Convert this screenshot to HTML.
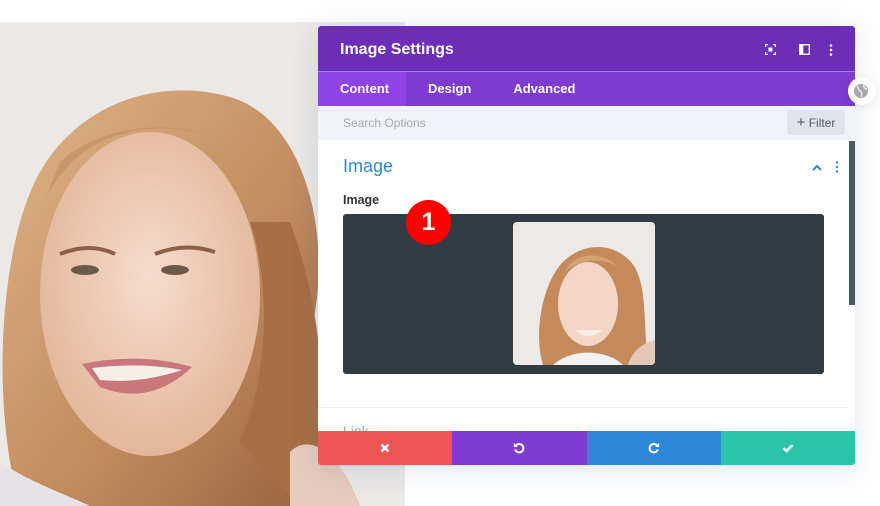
<!DOCTYPE html>
<html><head><meta charset="utf-8">
<style>
*{box-sizing:border-box;margin:0;padding:0}
body{width:880px;height:506px;background:#fff;position:relative;overflow:hidden;font-family:"Liberation Sans",sans-serif}
.photo{position:absolute;left:0;top:22px;width:405px;height:484px}
.panel{position:absolute;left:318px;top:26px;width:537px;height:439px;background:#fff;border-radius:3px;box-shadow:0 5px 30px rgba(43,87,151,.15);overflow:hidden}
.hdr{height:46px;background:#6c2eb9;color:#fff;font-size:16px;font-weight:bold;padding:0 0 0 22px;line-height:48px;border-bottom:1px solid #a77fdc}
.tabs{height:34px;background:#7e3bd0;display:flex;color:#fff;font-size:13px;font-weight:bold}
.tabs div{line-height:34px;padding:0 22px}
.tabs .act{background:#8e42e8;width:88px}
.search{height:34px;background:#f0f3f8;position:relative;color:#a5abb5;font-size:12px;line-height:34px;padding-left:25px}
.filter{position:absolute;right:10px;top:4px;width:58px;height:25px;background:#e1e5eb;border-radius:3px;color:#4c5866;font-size:12px;line-height:25px;text-align:center}
.sec{position:absolute;left:25px;top:130px;color:#2e8ad8;font-size:18px}
.lbl{position:absolute;left:25px;top:167px;color:#333;font-size:12.5px;font-weight:bold}
.box{position:absolute;left:25px;top:188px;width:481px;height:160px;background:#333b45;border-radius:3px}
.thumb{position:absolute;left:170px;top:8px;width:142px;height:143px;border-radius:4px;overflow:hidden}
.badge{position:absolute;left:88px;top:174px;width:45px;height:45px;border-radius:50%;background:#f00;color:#fff;font-weight:bold;font-size:25px;text-align:center;line-height:45px}
.line{position:absolute;left:0;right:6px;top:381px;height:1px;background:#edf1f6}
.bar{position:absolute;left:0;top:405px;width:537px;height:34px;display:flex}
.bar div{flex:1;display:flex;align-items:center;justify-content:center}
.scroll{position:absolute;right:0;top:115px;width:6px;height:164px;background:#4d5866}
</style></head><body>
<svg class="photo" viewBox="0 0 405 484" preserveAspectRatio="none">
<defs><radialGradient id="sk" cx="50%" cy="45%" r="60%"><stop offset="0" stop-color="#f5dccd"/><stop offset="1" stop-color="#e2b396"/></radialGradient>
<linearGradient id="hr" x1="0" y1="0" x2="1" y2="1"><stop offset="0" stop-color="#dfb488"/><stop offset=".6" stop-color="#c08a5e"/><stop offset="1" stop-color="#98643f"/></linearGradient></defs>
<rect width="405" height="484" fill="#ebe8e5"/>
<path d="M20 484 C-10 380 0 220 40 150 C80 80 160 55 230 75 C300 95 330 200 315 290 C305 360 320 420 300 484 Z" fill="url(#hr)"/>
<ellipse cx="150" cy="272" rx="110" ry="162" fill="url(#sk)"/>
<path d="M40 190 C70 110 150 90 230 120 C190 100 110 95 60 140 Z" fill="#c9976b"/>
<path d="M60 232 Q90 220 115 232" stroke="#8c6048" stroke-width="4" fill="none"/>
<path d="M155 232 Q185 220 215 230" stroke="#8c6048" stroke-width="4" fill="none"/>
<ellipse cx="85" cy="248" rx="14" ry="5" fill="#6b5a4c"/>
<ellipse cx="175" cy="248" rx="14" ry="5" fill="#6b5a4c"/>
<path d="M82 342 Q140 330 192 345 Q150 385 100 365 Z" fill="#c9777a"/>
<path d="M92 346 Q140 340 182 348 Q140 362 100 358 Z" fill="#f5efe8"/>
<path d="M250 200 C270 260 270 350 240 420 L300 484 L320 484 C330 380 320 280 290 200 Z" fill="#a86e45"/>
<path d="M290 430 C310 410 340 430 360 484 L290 484 Z" fill="#e6cbbc"/>
<path d="M0 440 C30 460 60 470 90 484 L0 484 Z" fill="#e6e3e6"/>
</svg>
<div class="panel">
<div class="hdr">Image Settings
<svg style="position:absolute;left:447px;top:18px" width="11" height="11" viewBox="0 0 11 11" fill="none" stroke="#fff" stroke-width="1.3"><path d="M0.6 3V0.6H3M8 0.6H10.4V3M10.4 8V10.4H8M3 10.4H0.6V8"/><rect x="3.5" y="3.5" width="4" height="4" fill="#fff" stroke="none"/></svg>
<svg style="position:absolute;left:481px;top:18px" width="11" height="11" viewBox="0 0 11 11"><rect x="0.7" y="0.7" width="9.6" height="9.6" fill="none" stroke="#fff" stroke-width="1.4"/><rect x="0.7" y="0.7" width="3.6" height="9.6" fill="#fff"/></svg>
<svg style="position:absolute;left:511px;top:18px" width="4" height="12"><circle cx="2" cy="1.5" r="1.3" fill="#fff"/><circle cx="2" cy="6" r="1.3" fill="#fff"/><circle cx="2" cy="10.5" r="1.3" fill="#fff"/></svg>
</div>
<div class="tabs"><div class="act">Content</div><div>Design</div><div style="padding-left:20px">Advanced</div></div>
<div class="search">Search Options<div class="filter"><b style="font-size:15px;font-weight:normal">+</b> Filter</div></div>
<div class="sec">Image</div>
<svg style="position:absolute;left:494px;top:138px" width="10" height="7"><path d="M1 6L5 2L9 6" stroke="#2e8ad8" stroke-width="2" fill="none"/></svg>
<svg style="position:absolute;left:517px;top:135px" width="4" height="12"><circle cx="2" cy="1.5" r="1.2" fill="#2e8ad8"/><circle cx="2" cy="6" r="1.2" fill="#2e8ad8"/><circle cx="2" cy="10.5" r="1.2" fill="#2e8ad8"/></svg>
<div class="lbl">Image</div>
<div class="box"><svg class="thumb" viewBox="0 0 142 143"><rect width="142" height="143" fill="#ece9e6"/>
<path d="M30 143 C20 110 30 60 50 40 C70 20 100 20 118 40 C135 60 130 100 135 143 Z" fill="#c48a5c"/>
<ellipse cx="75" cy="82" rx="30" ry="42" fill="#f2d5c4"/>
<path d="M52 50 C60 30 90 28 105 45 C90 35 65 37 52 50Z" fill="#d6a273"/>
<path d="M62 108 Q75 120 90 108 Z" fill="#f5efe8"/>
<path d="M40 143 C60 125 95 128 110 143Z" fill="#f2f2f2"/>
<path d="M115 143 C120 125 135 120 142 118 L142 143Z" fill="#e3c6b6"/></svg></div>
<div class="badge">1</div>
<div class="line"></div>
<div style="position:absolute;left:25px;top:397px;color:#9aa;font-size:14px">Link</div>
<div class="scroll"></div>
<div class="bar">
<div style="background:#ef5555"><svg width="10" height="10"><path d="M1.5 1.5L8.5 8.5M8.5 1.5L1.5 8.5" stroke="#fff" stroke-width="2.6"/></svg></div>
<div style="background:#7e3bd0"><svg width="12" height="12" viewBox="0 0 12 12"><path d="M3 3.5A4.2 4.2 0 1 1 2.2 7.5" stroke="#fff" stroke-width="2" fill="none"/><path d="M0.8 1V5H4.8Z" fill="#fff"/></svg></div>
<div style="background:#2e88d9"><svg width="12" height="12" viewBox="0 0 12 12"><path d="M9 3.5A4.2 4.2 0 1 0 9.8 7.5" stroke="#fff" stroke-width="2" fill="none"/><path d="M11.2 1V5H7.2Z" fill="#fff"/></svg></div>
<div style="background:#29c4a9"><svg width="12" height="10"><path d="M1.5 5L4.5 8L10.5 2" stroke="#fff" stroke-width="2.6" fill="none"/></svg></div>
</div>
</div>
<div style="position:absolute;left:848px;top:77px;width:28px;height:28px;border-radius:50%;background:#fff;box-shadow:0 2px 8px rgba(0,0,0,.08)"><svg style="position:absolute;left:5px;top:6px" width="16" height="16" viewBox="0 0 16 16"><circle cx="8" cy="8" r="7" fill="#a6a8ab"/><path d="M4 3C6 5 5 7 7 8S9 12 8 14M11 2C10 4 12 6 14 6" stroke="#e8e8e8" stroke-width="1.5" fill="none"/></svg></div>
</body></html>
